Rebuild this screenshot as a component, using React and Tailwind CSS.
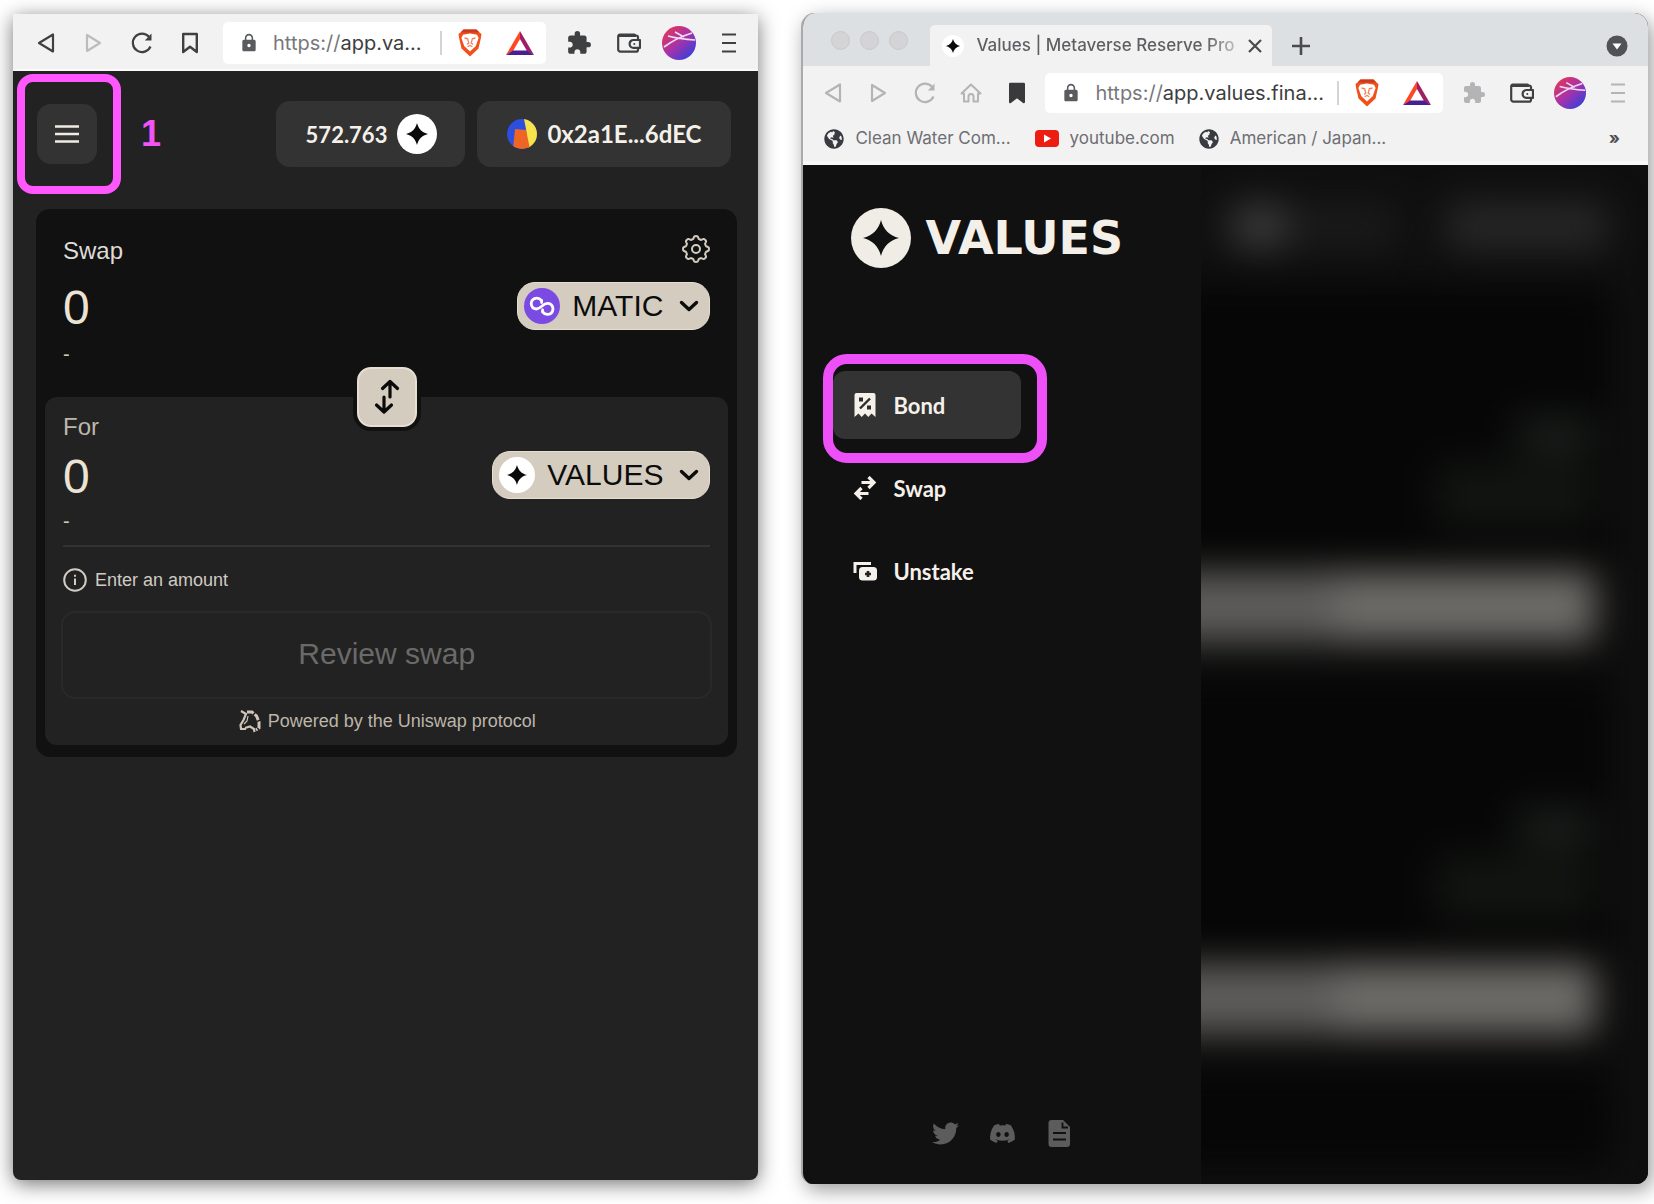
import React from "react";
import { FaTwitter, FaDiscord, FaGlobeAmericas } from "react-icons/fa";
import { MdLock, MdExtension } from "react-icons/md";

const SANS = "font-['Liberation_Sans',Arial,sans-serif]";
const BRAND = "font-['Lato',sans-serif]";

function Star({ className }) {
  return (
    <svg viewBox="0 0 24 24" className={className} fill="currentColor" aria-hidden="true">
      <path d="M12 0C13.6 6.4 17.6 10.4 24 12C17.6 13.6 13.6 17.6 12 24C10.4 17.6 6.4 13.6 0 12C6.4 10.4 10.4 6.4 12 0Z" />
    </svg>
  );
}

function Triangle({ flip, className }) {
  return (
    <svg viewBox="0 0 24 24" className={className} fill="none" stroke="currentColor" strokeWidth="2.2" strokeLinejoin="round" aria-hidden="true">
      {flip ? <path d="M5 4V20L18 12Z" /> : <path d="M19 3.5V20.5L5 12Z" />}
    </svg>
  );
}

function Reload({ className }) {
  return (
    <svg viewBox="0 0 24 24" className={className} fill="none" stroke="currentColor" strokeWidth="2.2" aria-hidden="true">
      <path d="M20.5 15.5A9.2 9.2 0 1 1 19 5.8" />
      <path d="M21.5 2.5V9.5H14.8Z" fill="currentColor" stroke="none" />
    </svg>
  );
}

function Bookmark({ filled, className }) {
  return (
    <svg viewBox="0 0 24 24" className={className} fill={filled ? "currentColor" : "none"} stroke="currentColor" strokeWidth="2.4" strokeLinejoin="round" aria-hidden="true">
      <path d="M5.2 3H18.8V21L12 15.8L5.2 21Z" />
    </svg>
  );
}

function Home({ className }) {
  return (
    <svg viewBox="0 0 24 24" className={className} fill="none" stroke="currentColor" strokeWidth="2" strokeLinejoin="round" aria-hidden="true">
      <path d="M2.5 12.5L12 3.5L21.5 12.5H19V20.5H14.5V15.5A2.5 2.5 0 0 0 9.5 15.5V20.5H5V12.5Z" />
    </svg>
  );
}

function Brave({ className }) {
  return (
    <svg viewBox="0 0 24 28" className={className} aria-hidden="true">
      <path d="M5.5 0.5H18.5L21.5 3.5L23.5 5L22.8 9.5L20.5 19.5L12 27.5L3.5 19.5L1.2 9.5L0.5 5L2.5 3.5Z" fill="#f1501b" />
      <path d="M5.5 0.5H18.5L21.5 3.5H2.5Z" fill="#c93a1e" />
      <path d="M5 5.8L12 4.6L19 5.8L20.6 9L17.8 17L12 22.5L6.2 17L3.4 9Z" fill="#fff" />
      <path d="M6.5 9L10.3 10M17.5 9L13.7 10M9.8 10.5L10.8 14L9 15.5M14.2 10.5L13.2 14L15 15.5M9.6 17.8L12 16.5L14.4 17.8" fill="none" stroke="#f4815f" strokeWidth="1.3" />
    </svg>
  );
}

function Bat({ className }) {
  return (
    <svg viewBox="0 0 28 24" className={className} aria-hidden="true">
      <path d="M14 0L0 24L7 20L14 8Z" fill="#ff4724" />
      <path d="M14 0L28 24L21 20L14 8Z" fill="#9e1f63" />
      <path d="M0 24H28L21 19.5H7Z" fill="#4a1f94" />
    </svg>
  );
}

function Wallet({ className }) {
  return (
    <svg viewBox="0 0 24 24" className={className} fill="none" stroke="currentColor" strokeWidth="2.2" strokeLinejoin="round" aria-hidden="true">
      <path d="M21 8.5V6.5A2 2 0 0 0 19 4.5L17 3.5H3A2 2 0 0 0 1.2 5.5V18.5A2.2 2.2 0 0 0 3.4 20.7H19A2 2 0 0 0 21 18.7V17" />
      <path d="M1.5 5H19" />
      <path d="M23 9H16.5A3.9 3.9 0 0 0 16.5 16.8H23Z" />
      <circle cx="17.3" cy="12.9" r="1" fill="currentColor" stroke="none" />
    </svg>
  );
}

function Avatar({ id, className }) {
  return (
    <svg viewBox="0 0 34 34" className={className} aria-hidden="true">
      <defs>
        <linearGradient id={id} x1="0.1" y1="0.1" x2="0.85" y2="0.9">
          <stop offset="0" stopColor="#e0365a" />
          <stop offset="0.5" stopColor="#a932a8" />
          <stop offset="1" stopColor="#3b3fd8" />
        </linearGradient>
        <clipPath id={id + "-clip"}>
          <circle cx="17" cy="17" r="17" />
        </clipPath>
      </defs>
      <circle cx="17" cy="17" r="17" fill={"url(#" + id + ")"} />
      <g clipPath={"url(#" + id + "-clip)"} stroke="#f3dcf2" strokeWidth="1.7" fill="none">
        <path d="M2 21Q14 12 30 7M6 10Q17 13 33 14M13 6L22 11" />
      </g>
    </svg>
  );
}

function Bars({ className }) {
  return (
    <svg viewBox="0 0 24 24" className={className} stroke="currentColor" strokeWidth="2" aria-hidden="true">
      <path d="M5 3.5H19M5 12H19M5 20.5H19" />
    </svg>
  );
}

function Gear({ className }) {
  const points = [];
  for (let i = 0; i < 96; i++) {
    const a = (i / 96) * Math.PI * 2;
    const tooth = Math.max(-0.65, Math.min(0.65, Math.cos(a * 8) * 1.1));
    const r = 11.6 + tooth * 2;
    points.push((14 + r * Math.sin(a)).toFixed(2) + "," + (14 - r * Math.cos(a)).toFixed(2));
  }
  return (
    <svg viewBox="0 0 28 28" className={className} fill="none" stroke="currentColor" strokeWidth="2" strokeLinejoin="round" aria-hidden="true">
      <polygon points={points.join(" ")} />
      <circle cx="14" cy="14" r="4" />
    </svg>
  );
}

function Chevron() {
  return (
    <svg viewBox="0 0 24 24" className="h-6 w-6" fill="none" stroke="currentColor" strokeWidth="3.4" strokeLinecap="round" strokeLinejoin="round" aria-hidden="true">
      <path d="M4.5 8.5L12 15.5L19.5 8.5" />
    </svg>
  );
}

function Polygon() {
  return (
    <svg viewBox="0 0 36 36" className="h-9 w-9" aria-hidden="true">
      <circle cx="18" cy="18" r="18" fill="#7b4ae2" />
      <g fill="none" stroke="#fff" strokeWidth="2.8" strokeLinejoin="round" strokeLinecap="round">
        <path d="M17.6 12.6Q15.5 10 12.4 10.2Q7.4 11 7.2 15.6Q7.6 20.6 12.4 21Q15 20.8 18 18Q21 15.3 23.8 15.4Q28.6 15.8 29 20.8Q28.6 26 23.8 26.4Q20.4 26.4 18.6 23.8" />
        <path d="M17.6 12.6V14.5M18.6 23.8V22" />
      </g>
    </svg>
  );
}

function UniMark() {
  return (
    <svg viewBox="0 0 24 24" className="h-6 w-6" aria-hidden="true">
      <g fill="none" stroke="#cfc6b9" strokeWidth="2.2">
        <path d="M3 2L8 5L5.5 11L2.5 16L3 20H8" />
        <path d="M9 3L14 3L18.5 7L21 13V19L18 21" strokeWidth="3" strokeDasharray="7 1.5" />
        <path d="M7 19L12 17.5L16 20L16.5 23" />
        <path d="M10 7L9 12L6 15" strokeWidth="1.2" />
      </g>
    </svg>
  );
}

function IconButton({ label, className, children }) {
  return (
    <button type="button" aria-label={label} className={"flex shrink-0 items-center justify-center " + className}>
      {children}
    </button>
  );
}

function AddressBar({ host, className }) {
  return (
    <div className={"flex min-w-0 flex-1 items-center rounded-[5px] bg-white pr-3 pl-4 " + className}>
      <MdLock className="h-5 w-5 shrink-0 text-[#5a5b5f]" aria-hidden="true" />
      <button type="button" aria-label="Address" className="ml-3.5 min-w-0 flex-1 text-left text-xl whitespace-nowrap text-[#77787b]">
        https://<span className="text-[#3c3d40]">{host}</span>
      </button>
      <div className="h-6 w-0.5 bg-[#d4d4d6]" />
      <IconButton label="Shields" className="ml-4">
        <Brave className="h-7 w-6" />
      </IconButton>
      <IconButton label="Rewards" className="ml-6">
        <Bat className="h-6 w-7" />
      </IconButton>
    </div>
  );
}

function TokenSelect({ icon, name }) {
  return (
    <button type="button" className="flex h-12 items-center rounded-[18px] border border-[#e6ded2] bg-[#d5ccc0] pr-2 pl-1.5 text-[30px] leading-none text-[#0c0c0c]">
      {icon}
      <span className="ml-3">{name}</span>
      <span className="ml-3.5">
        <Chevron />
      </span>
    </button>
  );
}

function Coin({ className, star }) {
  return (
    <span className={"flex items-center justify-center rounded-full bg-white text-[#0a0a0a] " + className}>
      <Star className={star} />
    </span>
  );
}

function AmountRow({ label, children }) {
  return (
    <div className="flex h-12 items-center justify-between gap-4">
      <input
        type="text"
        aria-label={label}
        defaultValue="0"
        className="h-12 w-full min-w-0 bg-transparent pt-0.5 text-5xl leading-none text-[#ece3d5] outline-none"
      />
      {children}
    </div>
  );
}

function SwapCard() {
  return (
    <section className={"mt-[42px] mr-[21px] ml-[23px] rounded-[14px] bg-[#111] px-[9px] pb-3 " + SANS}>
      <div className="px-[18px] pt-6 pb-[31px]">
        <div className="flex h-8 items-center justify-between">
          <h1 className="pt-1 text-2xl text-[#dfdbd5]">Swap</h1>
          <IconButton label="Settings" className="text-[#d5ccc0]">
            <Gear className="h-7 w-7" />
          </IconButton>
        </div>
        <div className="mt-[17px]">
          <AmountRow label="Amount to swap">
            <TokenSelect icon={<Polygon />} name="MATIC" />
          </AmountRow>
        </div>
        <p className="mt-3 text-xl leading-6 text-[#cfc8bd]">-</p>
      </div>

      <div className="relative rounded-xl bg-[#222] px-4 pt-3.5 pb-3">
        <button
          type="button"
          aria-label="Switch tokens"
          className="absolute -top-[30px] left-1/2 flex h-[60px] w-[60px] -translate-x-1/2 items-center justify-center rounded-[14px] border-2 border-[#e6ded2] bg-[#d5ccc0] text-[#0a0a0a] ring-4 ring-[#111]"
        >
          <svg viewBox="0 0 28 36" className="h-9 w-7" fill="none" stroke="currentColor" strokeWidth="3.2" strokeLinejoin="round" strokeLinecap="round" aria-hidden="true">
            <path d="M17 18V3.5M9.5 9.5L17 2.5L24.5 9.5" />
            <path d="M11 18V32M3.5 26L11 33L18.5 26" />
          </svg>
        </button>
        <div className="px-0.5">
          <h2 className="flex h-8 items-center text-2xl text-[#bdb7ad]">For</h2>
          <div className="mt-2">
            <AmountRow label="Amount to receive">
              <TokenSelect icon={<Coin className="h-9 w-9" star="h-5 w-5" />} name="VALUES" />
            </AmountRow>
          </div>
          <p className="mt-2.5 text-xl leading-6 text-[#cfc8bd]">-</p>
          <hr className="mt-3 border-t-2 border-[#333]" />
          <div className="mt-[21px] flex h-6 items-center gap-2 text-lg text-[#d0cbc3]">
            <svg viewBox="0 0 24 24" className="h-6 w-6" fill="none" stroke="currentColor" strokeWidth="2" aria-hidden="true">
              <circle cx="12" cy="12" r="10.8" />
              <path d="M12 10.5V17M12 6.8V8.8" />
            </svg>
            Enter an amount
          </div>
        </div>
        <button type="button" disabled className="mt-[19px] h-[88px] w-full rounded-[14px] border-2 border-[#292929] pb-1 text-[30px] text-[#6a6a68]">
          Review swap
        </button>
        <p className="mt-2.5 flex h-6 items-center justify-center gap-1.5 text-lg text-[#bdb5a9]">
          <UniMark />
          Powered by the Uniswap protocol
        </p>
      </div>
    </section>
  );
}

function SwapWindow() {
  return (
    <section className="mt-px mb-1 flex flex-col overflow-hidden rounded-b-lg bg-[#222] shadow-[0_4px_20px_rgba(0,0,0,0.55)]">
      <div className="flex h-[57px] shrink-0 items-center border-b-2 border-[#f9faf9] bg-[#f2f2f2] pt-0.5 pr-3 pl-[21px] text-[#3f4042]">
        <div className="flex items-center gap-6">
          <IconButton label="Back"><Triangle className="h-6 w-6" /></IconButton>
          <IconButton label="Forward" className="text-[#bcbcbe]"><Triangle flip className="h-6 w-6" /></IconButton>
          <IconButton label="Reload"><Reload className="h-6 w-6" /></IconButton>
          <IconButton label="Bookmark"><Bookmark className="h-6 w-6" /></IconButton>
        </div>
        <div className="ml-[21px] flex min-w-0 flex-1">
          <AddressBar host="app.va..." className="h-[42px]" />
        </div>
        <div className="ml-4 flex items-center gap-4">
          <IconButton label="Extensions" className="w-[34px]"><MdExtension className="h-[26px] w-[26px]" /></IconButton>
          <IconButton label="Wallet" className="w-[34px]"><Wallet className="h-6 w-6" /></IconButton>
          <IconButton label="Profile" className="w-[34px]"><Avatar id="profile-a" className="h-[34px] w-[34px]" /></IconButton>
          <IconButton label="Menu" className="w-[34px]"><Bars className="h-6 w-6" /></IconButton>
        </div>
      </div>

      <header className="flex items-center pt-[30px] pr-[27px] pl-6">
        <div className="relative">
          <IconButton label="Open navigation" className="h-[60px] w-[60px] rounded-[14px] bg-[#333] text-[#f0ece4]">
            <svg viewBox="0 0 24 18" className="h-[18px] w-6" stroke="currentColor" strokeWidth="2.4" aria-hidden="true">
              <path d="M0 1.5H24M0 9H24M0 16.5H24" />
            </svg>
          </IconButton>
          <span className="pointer-events-none absolute -top-[30px] -right-6 -bottom-[30px] -left-5 rounded-2xl border-8 border-[#fd57fd]" />
        </div>
        <span className={"ml-11 text-4xl leading-none font-bold text-[#f154f5] " + SANS}>1</span>
        <div className={"ml-auto flex gap-3 font-bold text-[#f5f1ea] " + BRAND}>
          <button type="button" className="flex h-[66px] items-center gap-2.5 rounded-[14px] bg-[#333] pr-7 pl-[30px] text-[22px]">
            572.763
            <Coin className="h-10 w-10" star="h-[22px] w-[22px]" />
          </button>
          <button type="button" className="flex h-[66px] items-center gap-2.5 rounded-[14px] bg-[#333] px-[30px] text-2xl">
            <svg viewBox="0 0 30 30" className="h-[30px] w-[30px]" aria-hidden="true">
              <defs>
                <clipPath id="account-clip"><circle cx="15" cy="15" r="15" /></clipPath>
              </defs>
              <g clipPath="url(#account-clip)">
                <rect width="30" height="30" fill="#2c4fe0" />
                <path d="M17 0H30V30H21L19 10Z" fill="#f8e34a" />
                <path d="M8 10L19 11L23 30H6Z" fill="#ef6526" />
              </g>
            </svg>
            0x2a1E...6dEC
          </button>
        </div>
      </header>

      <SwapCard />
    </section>
  );
}

function BookmarkLink({ icon, children }) {
  return (
    <a href="#" className="flex items-center gap-[11px] whitespace-nowrap">
      {icon}
      {children}
    </a>
  );
}

function NavLink({ icon, children, active }) {
  return (
    <a
      href="#"
      aria-current={active ? "page" : undefined}
      className={"flex h-[68px] items-center gap-4 rounded-xl pl-5 text-[22px] font-bold text-[#f5f1ea] " + (active ? "bg-[#333]" : "")}
    >
      {icon}
      {children}
    </a>
  );
}

function BlurredContent() {
  return (
    <div className="min-w-0 flex-1 overflow-hidden bg-[#0f0f0f]" aria-hidden="true">
      <div className="-ml-20 flex flex-col blur-[18px]">
        <div className="mt-7 flex h-[66px] items-center gap-12 pr-10 pl-24">
          <div className="flex h-12 flex-1 items-center rounded-xl bg-[#1a1a1a] pl-4">
            <div className="h-12 w-14 rounded-full bg-[#3a3a3a]" />
          </div>
          <div className="h-12 flex-1 rounded-xl bg-[#272727]" />
        </div>
        <div className="mt-7 flex flex-col">
          {["first", "second"].map((k) => (
            <div key={k} className="mr-9 mb-4 flex flex-col bg-[#060606] pt-32 pb-5">
              <div className="mr-4 h-10 w-20 self-end bg-[#181c19]" />
              <div className="mt-2 mr-4 h-16 w-40 self-end bg-[#111411]" />
              <div className="mt-11 mr-4 flex h-[72px] bg-[#6d6b67]">
                <div className="w-[45%] bg-[#5d5c5a]" />
              </div>
            </div>
          ))}
          <div className="mr-9 h-24 bg-[#060606]" />
        </div>
      </div>
    </div>
  );
}

function NavWindow() {
  return (
    <section className="flex flex-col overflow-hidden rounded-t-[14px] rounded-b-xl border-l-2 border-[#a9aaab] bg-[#111] shadow-[4px_6px_20px_rgba(0,0,0,0.4)]">
      <div className="flex h-[53px] shrink-0 items-end bg-[#dde0e2] pr-[19px] pl-7">
        <div className="mb-4 flex gap-2.5">
          <span className="h-[19px] w-[19px] rounded-full border border-[#c9c9cb] bg-[#d4d4d6]" />
          <span className="h-[19px] w-[19px] rounded-full border border-[#c9c9cb] bg-[#d4d4d6]" />
          <span className="h-[19px] w-[19px] rounded-full border border-[#c9c9cb] bg-[#d4d4d6]" />
        </div>
        <div className="ml-[22px] flex h-[41px] w-[342px] items-center rounded-t-[5px] bg-[#f2f2f2] pr-2 pl-3">
          <Coin className="h-[22px] w-[22px]" star="h-3.5 w-3.5" />
          <span className="ml-3 flex-1 bg-linear-to-r from-[#5d5e61] from-85% to-[#e4e4e4] bg-clip-text text-[17px] font-medium whitespace-nowrap text-transparent">
            Values | Metaverse Reserve Pro
          </span>
          <IconButton label="Close tab" className="text-[#4a4b4e]">
            <svg viewBox="0 0 18 18" className="h-[18px] w-[18px]" stroke="currentColor" strokeWidth="2.2" aria-hidden="true">
              <path d="M3 3L15 15M15 3L3 15" />
            </svg>
          </IconButton>
        </div>
        <IconButton label="New tab" className="mb-[11px] ml-5 text-[#4a4b4e]">
          <svg viewBox="0 0 18 18" className="h-[18px] w-[18px]" stroke="currentColor" strokeWidth="2.6" aria-hidden="true">
            <path d="M9 0V18M0 9H18" />
          </svg>
        </IconButton>
        <IconButton label="Search tabs" className="mb-2 ml-auto">
          <svg viewBox="0 0 24 24" className="h-6 w-6" aria-hidden="true">
            <circle cx="12" cy="12" r="10.5" fill="#505256" />
            <path d="M7.5 9.5H16.5L12 15.5Z" fill="#fff" />
          </svg>
        </IconButton>
      </div>

      <div className="flex h-[54px] shrink-0 items-center bg-[#f2f2f2] pr-3.5 pl-[18px] text-[#b4b4b6]">
        <div className="flex items-center gap-[22px]">
          <IconButton label="Back"><Triangle className="h-6 w-6" /></IconButton>
          <IconButton label="Forward"><Triangle flip className="h-6 w-6" /></IconButton>
          <IconButton label="Reload"><Reload className="h-6 w-6" /></IconButton>
          <IconButton label="Home"><Home className="h-6 w-6" /></IconButton>
          <IconButton label="Bookmark" className="text-[#3a3a3c]"><Bookmark filled className="h-6 w-6" /></IconButton>
        </div>
        <div className="ml-4 flex min-w-0 flex-1">
          <AddressBar host="app.values.fina..." className="h-10" />
        </div>
        <div className="ml-[15px] flex items-center gap-4">
          <IconButton label="Extensions" className="w-8"><MdExtension className="h-6 w-6" /></IconButton>
          <IconButton label="Wallet" className="w-8 text-[#3f4042]"><Wallet className="h-6 w-6" /></IconButton>
          <IconButton label="Profile" className="w-8"><Avatar id="profile-b" className="h-8 w-8" /></IconButton>
          <IconButton label="Menu" className="w-8"><Bars className="h-6 w-6" /></IconButton>
        </div>
      </div>

      <div className="flex h-[45px] shrink-0 items-center gap-6 border-b-4 border-[#f8f8f8] bg-[#f2f2f2] pr-7 pb-1 pl-[21px] text-[17px] text-[#6d6e72]">
        <BookmarkLink icon={<FaGlobeAmericas className="h-5 w-5 text-[#3a3b40]" />}>Clean Water Com...</BookmarkLink>
        <BookmarkLink
          icon={
            <svg viewBox="0 0 24 17" className="h-[17px] w-6" aria-hidden="true">
              <rect width="24" height="17" rx="4" fill="#ee1d12" />
              <path d="M9 4.5V12.5L16 8.5Z" fill="#fff" />
            </svg>
          }
        >
          youtube.com
        </BookmarkLink>
        <BookmarkLink icon={<FaGlobeAmericas className="h-5 w-5 text-[#3a3b40]" />}>American / Japan...</BookmarkLink>
        <button type="button" aria-label="More bookmarks" className="ml-auto font-bold text-[#4a4b4e]">»</button>
      </div>

      <div className="flex flex-1">
        <aside className={"relative z-10 flex w-[398px] shrink-0 flex-col bg-[#111] " + BRAND}>
          <div className="flex items-center gap-3.5 pt-[43px] pl-12 text-[#f3efe9]">
            <span className="flex h-[60px] w-[60px] items-center justify-center rounded-full bg-[#f0ece6] text-[#111]">
              <Star className="h-9 w-9" />
            </span>
            <span className="font-['DejaVu_Sans',sans-serif] text-[46px] leading-none font-bold">VALUES</span>
          </div>
          <nav className="mt-[103px] ml-[30px] flex w-[188px] flex-col gap-[15px]">
            <div className="relative">
              <NavLink
                active
                icon={
                  <svg viewBox="0 0 24 26" className="h-[26px] w-6" aria-hidden="true">
                    <path d="M1.5 3Q1.5 1 3.5 1H20.5Q22.5 1 22.5 3V25L18.5 21.5L15.3 25L12 21.5L8.7 25L5.5 21.5L1.5 25Z" fill="#f5f1ea" />
                    <path d="M7 16.5L17 6.5" stroke="#2c2c2c" strokeWidth="2.4" />
                    <rect x="6" y="5.5" width="4" height="4" fill="#2c2c2c" />
                    <rect x="14" y="13.5" width="4" height="4" fill="#2c2c2c" />
                  </svg>
                }
              >
                Bond
              </NavLink>
              <span className="pointer-events-none absolute -top-[17px] -right-[26px] -bottom-6 -left-2.5 rounded-3xl border-10 border-[#ee50f8]" />
            </div>
            <NavLink
              icon={
                <svg viewBox="0 0 24 24" className="h-6 w-6" fill="none" stroke="#f5f1ea" strokeWidth="3.2" aria-hidden="true">
                  <path d="M8.5 6.5H20M15.5 1L21 6.5L15.5 12" />
                  <path d="M15.5 17.5H4M8.5 12L3 17.5L8.5 23" />
                </svg>
              }
            >
              Swap
            </NavLink>
            <NavLink
              icon={
                <svg viewBox="0 0 24 24" className="h-6 w-6" aria-hidden="true">
                  <path d="M2 14V4.5H18" fill="none" stroke="#f5f1ea" strokeWidth="3" />
                  <rect x="6" y="8" width="18" height="13.5" rx="3.5" fill="#f5f1ea" />
                  <path d="M12 15H18M15 12V18" stroke="#222" strokeWidth="2.6" />
                </svg>
              }
            >
              Unstake
            </NavLink>
          </nav>
          <div className="mt-auto flex justify-center gap-[30px] pb-[37px] text-[#5c5c5c]">
            <a href="#" aria-label="Twitter"><FaTwitter className="h-[27px] w-[27px]" /></a>
            <a href="#" aria-label="Discord"><FaDiscord className="h-[27px] w-[27px]" /></a>
            <a href="#" aria-label="Documentation">
              <svg viewBox="0 0 27 27" className="h-[27px] w-[27px]" aria-hidden="true">
                <path d="M5.5 0H17L24 7V24Q24 27 21 27H5.5Q2.5 27 2.5 24V3Q2.5 0 5.5 0Z" fill="currentColor" />
                <path d="M16.5 2.5V7.5H22" fill="none" stroke="#111" strokeWidth="1.8" />
                <path d="M7 13H20M7 19.5H20" stroke="#111" strokeWidth="2.2" />
              </svg>
            </a>
          </div>
        </aside>
        <BlurredContent />
      </div>
    </section>
  );
}

export default function App() {
  return (
    <main className="grid min-h-screen grid-cols-[745fr_846fr] gap-[43px] bg-white pt-[13px] pr-1.5 pb-5 pl-[13px] font-['Inter',sans-serif]">
      <SwapWindow />
      <NavWindow />
    </main>
  );
}
